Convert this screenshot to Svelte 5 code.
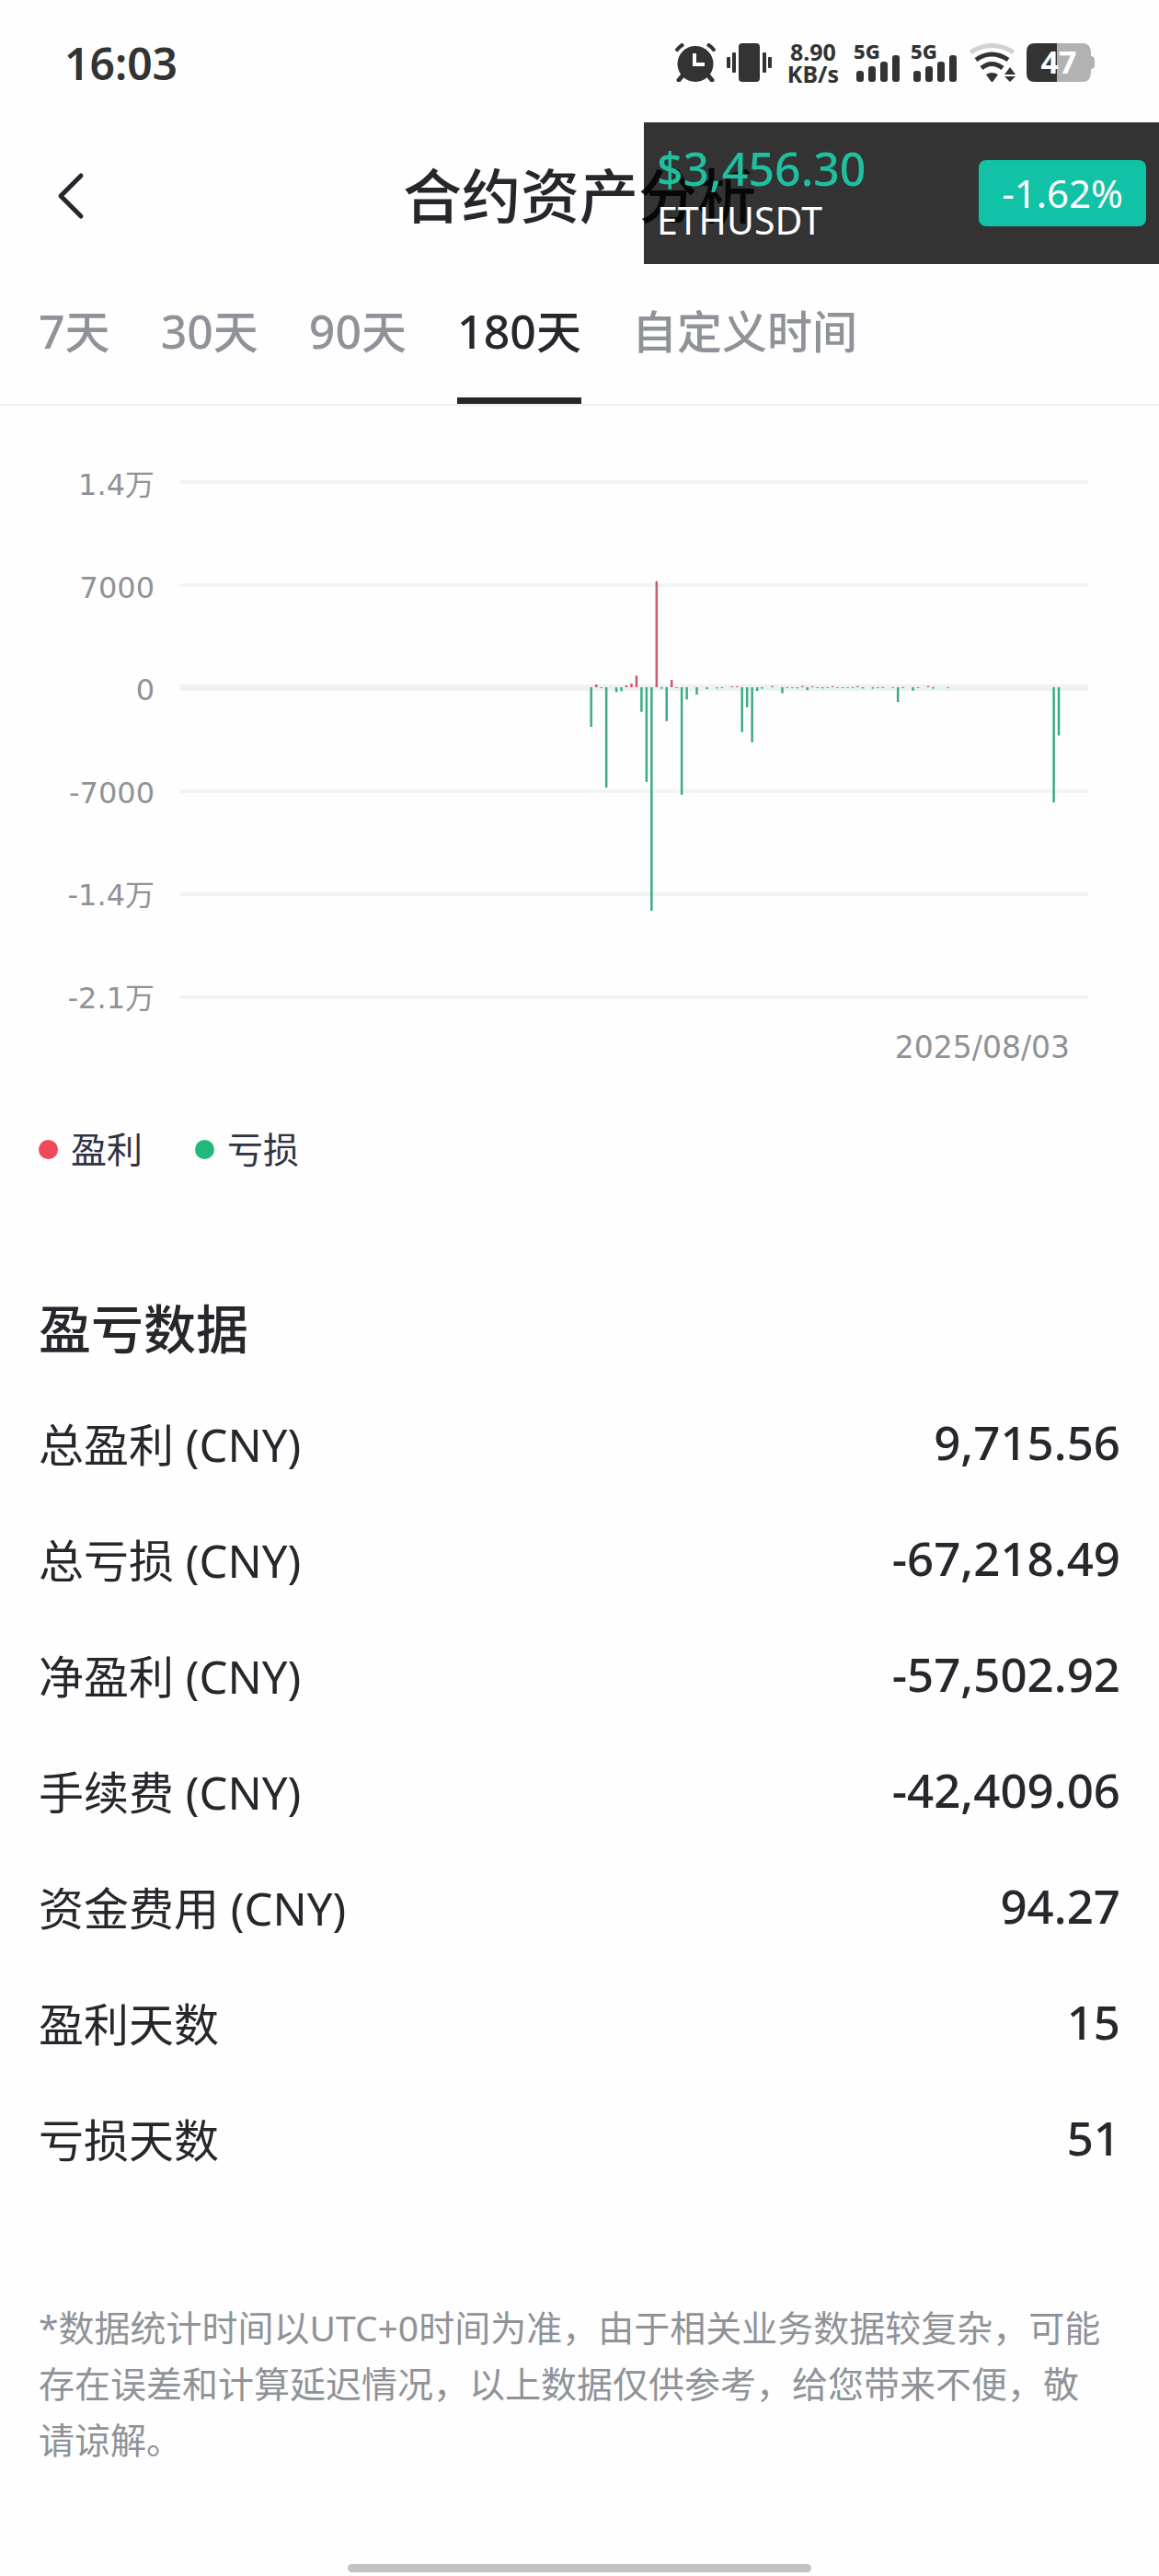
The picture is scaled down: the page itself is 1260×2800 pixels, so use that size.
<script>

let tabs = [
	{ id: '7', count: '7', label: '天' },
	{ id: '30', count: '30', label: '天' },
	{ id: '90', count: '90', label: '天' },
	{ id: '180', count: '180', label: '天' },
	{ id: 'custom', count: '', label: '自定义时间' }
];
let activeTab = '180';

let ticks = ['1.4万', '7000', '0', '-7000', '-1.4万', '-2.1万'];

// [day, profit or loss]
let days = [
	[0, -2690], [1, 190], [2, -60], [3, -6820], [5, -330], [6, -270], [7, 125],
	[8, 250], [9, 790], [10, -1670], [11, -6430], [12, -15190], [13, 7200],
	[14, -100], [15, -2300], [16, 500], [17, -60], [18, -7300], [19, -830],
	[21, -500], [23, -125], [25, -80], [26, -40], [28, 40], [29, 60],
	[30, -3050], [31, -1360], [32, -3740], [33, -250], [34, -100], [36, 80],
	[38, -400], [39, -40], [40, -60], [41, -80], [42, 80], [43, -190],
	[44, 40], [45, -60], [46, -80], [47, -40], [48, 60], [49, -40], [50, -60],
	[51, -60], [52, -40], [53, 80], [54, -80], [56, -100], [57, -60],
	[58, -40], [60, -60], [61, -1000], [62, -60], [64, -230], [65, -40],
	[67, 80], [68, -100], [71, -60], [92, -7830], [93, -3280]
];

const ZERO = 228;
const STEP = 112;

function barHeight(value) {
	return Math.max(1, Math.abs(value) / 7000 * STEP);
}

function barX(day) {
	return 445.5 + day * 5.466;
}

let rows = [
	['总盈利 (CNY)', '9,715.56'],
	['总亏损 (CNY)', '-67,218.49'],
	['净盈利 (CNY)', '-57,502.92'],
	['手续费 (CNY)', '-42,409.06'],
	['资金费用 (CNY)', '94.27'],
	['盈利天数', '15'],
	['亏损天数', '51']
];
</script>

<div class="page">
	<div class="status">
		<span class="clock">16:03</span>
		<div class="icons">
			<svg width="44" height="42" viewBox="0 0 44 42" fill="#333">
				<circle cx="22" cy="22.500" r="19.500" />
				<path d="M9 34 4 40M35 34l5 6" stroke="#333" stroke-width="5" stroke-linecap="round" />
				<path d="M1 8.500Q4 4 9 1M43 8.500Q40 4 35 1" stroke="#333" stroke-width="4" fill="none" />
				<path d="M21 11v12h11" stroke="#fff" stroke-width="4" fill="none" />
			</svg>
			<svg width="49" height="42" viewBox="0 0 49 42" fill="#333">
				<rect x="13" width="23" height="42" rx="4" />
				<rect x="6" y="10" width="4" height="22" rx="1" />
				<rect x="0" y="15" width="4" height="12" rx="1" />
				<rect x="39" y="10" width="4" height="22" rx="1" />
				<rect x="45" y="15" width="4" height="12" rx="1" />
			</svg>
			<span class="speed">8.90<br />KB/s</span>
			{#each [1, 2] as sim}
				<svg class="signal" width="50" height="42" viewBox="0 0 50 42" fill="#333">
					<text x="-1" y="17">5G</text>
					<rect x="2" y="30" width="8" height="12" rx="3" />
					<rect x="15" y="25" width="8" height="17" rx="3" />
					<rect x="28" y="20" width="8" height="22" rx="3" />
					<rect x="41" y="13" width="8" height="29" rx="3" />
				</svg>
			{/each}
			<svg width="51" height="42" viewBox="0 0 51 42" fill="none" stroke-width="5">
				<path d="M2 10Q25 -5 49 10" stroke="#d2d2d2" />
				<path d="M8 18Q25 6 43 18" stroke="#333" />
				<path d="M14 27Q25 18 37 27" stroke="#333" />
				<path d="M19 34Q25 30 32 34L27 41Q25.500 43 24 41Z" fill="#333" />
				<path d="M39 34 45 26 51 34ZM39 36H51L45 42Z" fill="#333" />
			</svg>
			<svg class="battery" width="74" height="42" viewBox="0 0 74 42">
				<path d="M33 0H61Q69 0 70 9V14Q74 14 74 18V24Q74 28 70 28V33Q69 42 61 42H33Z" fill="#b2b2b2" />
				<path d="M33 0H9Q0 0 0 9V33Q0 42 9 42H33Z" fill="#333" />
				<text x="35" y="33" text-anchor="middle" fill="#fff">47</text>
			</svg>
		</div>
	</div>

	<header>
		<button class="back" aria-label="返回">
			<svg width="30" height="52" viewBox="0 0 30 52" fill="none" stroke="#25272c" stroke-width="5" stroke-linecap="round" stroke-linejoin="round">
				<path d="M26 4 4 26 26 48" />
			</svg>
		</button>
		<h1>合约资产分析</h1>
	</header>

	<div class="ticker">
		<div class="pair">
			<span class="price">$3,456.30</span>
			<span class="symbol">ETHUSDT</span>
		</div>
		<span class="change">-1.62%</span>
	</div>

	<nav>
		{#each tabs as tab}
			<button class="tab" class:active={activeTab === tab.id} on:click={() => activeTab = tab.id}>
				<span class="count">{tab.count}</span>{tab.label}
			</button>
		{/each}
	</nav>

	<main>
		<section class="chart">
			<div class="axis">
				{#each ticks as tick}
					<span>{tick}</span>
				{/each}
			</div>
			<div class="plot">
				<svg width="100%" height="568" viewBox="0 0 987 568" preserveAspectRatio="none">
					{#each ticks as tick, i}
						{#if tick === '0'}
							<rect x="0" y={ZERO - 4} width="987" height="7" fill="#ebf1f5" />
						{:else}
							<rect x="0" y={ZERO + (i - 2) * STEP - 2} width="987" height="4" fill="#f1f3f8" />
						{/if}
					{/each}
					{#each days as [day, value]}
						<rect
							x={barX(day)}
							y={value > 0 ? ZERO - 1 - barHeight(value) : ZERO - 1}
							width="2.5"
							height={barHeight(value)}
							fill={value > 0 ? '#cf5870' : '#3dab83'}
						/>
					{/each}
				</svg>
				<span class="date">2025/08/03</span>
			</div>
		</section>

		<div class="legend">
			<span class="profit">盈利</span>
			<span class="loss">亏损</span>
		</div>

		<h2>盈亏数据</h2>
		<dl>
			{#each rows as [name, value]}
				<div class="row">
					<dt>{name}</dt>
					<dd>{value}</dd>
				</div>
			{/each}
		</dl>

		<p class="note">*数据统计时间以UTC+0时间为准，由于相关业务数据较复杂，可能存在误差和计算延迟情况，以上数据仅供参考，给您带来不便，敬请谅解。</p>
	</main>

	<div class="home"></div>
</div>

<style>
:global(body) {
	background: #fefefe;
}

.page {
	position: relative;
	display: flex;
	flex-direction: column;
	min-height: 100vh;
	box-sizing: border-box;
	padding-bottom: 4px;
	color: #25272c;
	font-family: "Noto Sans", "Noto Sans CJK SC", sans-serif;
}

svg {
	display: block;
	flex: none;
}

button {
	padding: 0;
	border: 0;
	background: none;
	color: inherit;
	font: inherit;
	cursor: pointer;
}

.status {
	display: flex;
	align-items: center;
	justify-content: space-between;
	height: 136px;
	padding: 0 70px;
	color: #333;
}

.clock {
	font-size: 48px;
	font-weight: 600;
}

.icons {
	display: flex;
	align-items: center;
	gap: 12px;
}

.speed {
	margin: 0 5px;
	font-size: 25px;
	font-weight: 700;
	line-height: 24px;
	text-align: center;
}

.signal {
	overflow: visible;
	font-size: 22px;
	font-weight: 800;
}

.battery {
	overflow: visible;
	font-size: 34px;
	font-weight: 700;
}

header {
	display: grid;
	grid-template-columns: 1fr auto 1fr;
	align-items: center;
	height: 154px;
	padding: 0 62px;
}

.back {
	justify-self: start;
}

h1 {
	margin: 0;
	font-size: 64px;
	font-weight: 500;
	line-height: 80px;
}

.ticker {
	position: absolute;
	top: 133px;
	right: 0;
	display: flex;
	align-items: center;
	justify-content: space-between;
	width: 560px;
	height: 154px;
	box-sizing: border-box;
	padding: 0 14px;
	background: rgba(0, 0, 0, 0.8);
	color: #fff;
}

.pair {
	display: flex;
	flex-direction: column;
	padding-top: 2px;
}

.price {
	color: #1fbf9f;
	font-size: 50px;
	font-weight: 500;
	line-height: 56px;
}

.symbol {
	font-size: 41px;
	line-height: 56px;
}

.change {
	padding: 0 25px;
	border-radius: 8px;
	background: #12c2a6;
	font-size: 42px;
	line-height: 72px;
}

nav {
	display: flex;
	gap: 55px;
	height: 149px;
	padding: 0 42px;
	border-bottom: 2px solid #efefef;
}

.tab {
	position: relative;
	padding-bottom: 14px;
	color: #8f9399;
	font-size: 49px;
	font-weight: 500;
	white-space: nowrap;
}

.count {
	font-size: 50px;
}

.tab.active {
	color: #25272c;
}

.tab.active::after {
	content: '';
	position: absolute;
	right: 0;
	bottom: 0;
	left: 0;
	height: 7px;
	background: #25272c;
}

main {
	padding: 0 42px;
}

.chart {
	display: flex;
	gap: 28px;
	padding: 62px 35px 0 0;
	color: #8f9296;
	font-family: "DejaVu Sans", "Noto Sans CJK SC", sans-serif;
	font-size: 32px;
	line-height: 48px;
}

.axis {
	display: flex;
	flex-direction: column;
	justify-content: space-between;
	width: 126px;
	height: 606px;
	text-align: right;
}

.plot {
	flex: 1;
	min-width: 0;
	padding-top: 17px;
}

.date {
	display: block;
	margin: 27px 20px 0 0;
	font-size: 33px;
	text-align: right;
}

.legend {
	display: flex;
	gap: 57px;
	margin-top: 58px;
	color: #2f3344;
	font-size: 39px;
	line-height: 56px;
}

.legend span {
	display: flex;
	align-items: center;
	gap: 14px;
}

.legend span::before {
	content: '';
	width: 21px;
	height: 21px;
	border-radius: 50%;
}

.profit::before {
	background: #f04a5a;
}

.loss::before {
	background: #22b87c;
}

h2 {
	margin: 127px 0 20px;
	font-size: 57px;
	font-weight: 500;
	line-height: 80px;
}

dl {
	margin: 0;
}

.row {
	display: flex;
	align-items: center;
	justify-content: space-between;
	height: 126px;
}

dt {
	font-size: 49px;
}

dd {
	margin: 0;
	font-size: 51px;
	font-weight: 500;
}

.note {
	margin: 113px 0 0;
	padding-right: 8px;
	color: #8f9399;
	font-size: 39px;
	line-height: 61px;
}

.home {
	width: 40%;
	height: 9px;
	margin: auto auto 0;
	border-radius: 5px;
	background: #c2c2c2;
}
</style>
